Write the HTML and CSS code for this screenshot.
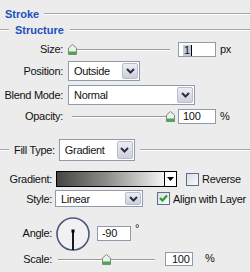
FILE: index.html
```html
<!DOCTYPE html>
<html>
  <head>
    <title>Stroke</title>
    <link rel="stylesheet" href="styles.css">
  </head>
  <body>
    <div class="panel">
      <div class="legend head"><span class="title">Stroke</span><span class="rule"></span></div>
      <div class="legend sub"><span class="rule lead"></span><span class="title">Structure</span><span class="rule"></span></div>

      <!-- Structure -->
      <div class="row r-size">
        <span class="lbl">Size:</span>
        <div class="slider s-size">
          <svg class="thumb" width="9" height="11" viewBox="0 0 9 11"><path d="M0.5 10.5 V4 L4.5 0.5 L8.5 4 V10.5 Z" fill="#eef0ea" stroke="#7d8a7d"/><rect x="1" y="7.5" width="7" height="2.5" fill="#3cb04a"/></svg>
          <span class="track"></span>
        </div>
        <span class="field f-size"><span class="sel">1</span></span>
        <span class="unit">px</span>
      </div>

      <div class="row r-pos">
        <span class="lbl">Position:</span>
        <div class="select sel-pos">
          <span class="val">Outside</span>
          <span class="btn"><svg width="9" height="6" viewBox="0 0 9 6"><path d="M1 1 L4.5 4.5 L8 1" stroke="#2a2d48" stroke-width="2" fill="none"/></svg></span>
        </div>
      </div>

      <div class="row r-blend">
        <span class="lbl">Blend Mode:</span>
        <div class="select sel-blend">
          <span class="val">Normal</span>
          <span class="btn"><svg width="9" height="6" viewBox="0 0 9 6"><path d="M1 1 L4.5 4.5 L8 1" stroke="#2a2d48" stroke-width="2" fill="none"/></svg></span>
        </div>
      </div>

      <div class="row r-opacity">
        <span class="lbl">Opacity:</span>
        <div class="slider s-opacity">
          <span class="track"></span>
          <svg class="thumb" width="9" height="11" viewBox="0 0 9 11"><path d="M0.5 10.5 V4 L4.5 0.5 L8.5 4 V10.5 Z" fill="#eef0ea" stroke="#7d8a7d"/><rect x="1" y="7.5" width="7" height="2.5" fill="#3cb04a"/></svg>
        </div>
        <span class="field f-opacity">100</span>
        <span class="unit">%</span>
      </div>

      <!-- Fill -->
      <div class="row r-fill">
        <span class="rule lead"></span>
        <span class="fill-lbl">Fill Type:</span>
        <div class="select sel-fill">
          <span class="val">Gradient</span>
          <span class="btn"><svg width="9" height="6" viewBox="0 0 9 6"><path d="M1 1 L4.5 4.5 L8 1" stroke="#2a2d48" stroke-width="2" fill="none"/></svg></span>
        </div>
        <span class="rule"></span>
      </div>

      <div class="row sec2 r-grad">
        <span class="lbl">Gradient:</span>
        <div class="grad">
          <span class="ramp"></span>
          <span class="drop"><svg width="7" height="4" viewBox="0 0 7 4"><path d="M0 0 H7 L3.5 4 Z" fill="#000"/></svg></span>
        </div>
        <span class="check c-rev"></span>
        <span class="check-lbl">Reverse</span>
      </div>

      <div class="row sec2 r-style">
        <span class="lbl">Style:</span>
        <div class="select sel-style">
          <span class="val">Linear</span>
          <span class="btn"><svg width="9" height="6" viewBox="0 0 9 6"><path d="M1 1 L4.5 4.5 L8 1" stroke="#2a2d48" stroke-width="2" fill="none"/></svg></span>
        </div>
        <span class="check c-align"><svg width="11" height="11" viewBox="0 0 11 11"><path d="M2 5 L4.5 7.5 L9 2.5" stroke="#21a121" stroke-width="2.2" fill="none"/></svg></span>
        <span class="check-lbl">Align with Layer</span>
      </div>

      <div class="row sec2 r-angle">
        <span class="lbl">Angle:</span>
        <svg class="dial" width="36" height="36" viewBox="0 0 36 36"><circle cx="18" cy="18" r="16" fill="#f1f1f3" stroke="#4c5878" stroke-width="1.6"/><line x1="18" y1="15" x2="18" y2="34" stroke="#000" stroke-width="1.8"/><rect x="16.5" y="13.5" width="3" height="3" fill="#000"/></svg>
        <span class="field f-angle">-90</span>
        <span class="deg">°</span>
      </div>

      <div class="row sec2 r-scale">
        <span class="lbl">Scale:</span>
        <div class="slider s-scale">
          <span class="track"></span>
          <svg class="thumb" width="9" height="11" viewBox="0 0 9 11"><path d="M0.5 10.5 V4 L4.5 0.5 L8.5 4 V10.5 Z" fill="#eef0ea" stroke="#7d8a7d"/><rect x="1" y="7.5" width="7" height="2.5" fill="#3cb04a"/></svg>
          <span class="track"></span>
        </div>
        <span class="field f-scale">100</span>
        <span class="unit">%</span>
      </div>
    </div>
  </body>
</html>
```

FILE: styles.css
```css
body {
  margin: 0;
  background: #ececec;
  font-family: "Liberation Sans", Arial, sans-serif;
  font-size: 11px;
  letter-spacing: -0.3px;
  color: #111;
}
.panel {
  width: 250px;
  height: 272px;
  overflow: hidden;
}
.legend {
  display: flex;
  align-items: center;
  height: 16px;
}
.legend .title {
  font-weight: bold;
  color: #1f4fc0;
  letter-spacing: 0;
}
.rule {
  flex: 1;
  height: 1px;
  background: #a6a6a6;
  border-bottom: 1px solid #fff;
}
.head {
  margin-top: 6px;
  padding-left: 5px;
}
.head .rule {
  margin-left: 5px;
}
.rule.lead {
  flex: none;
  width: 9px;
}
.sub .lead {
  margin-right: 6px;
}
.sub .title + .rule {
  margin-left: 6px;
}

.row {
  display: flex;
  align-items: center;
}
.lbl {
  flex: none;
  width: 63px;
  margin-right: 5px;
  text-align: right;
}
.sec2 .lbl {
  width: 52px;
  margin-right: 3px;
}

/* sliders */
.slider {
  display: flex;
  align-items: center;
  flex: none;
}
.track {
  flex: 1;
  height: 1px;
  background: #9a9a9a;
  border-bottom: 1px solid #fff;
  margin-top: 2px;
}
.thumb {
  flex: none;
  display: block;
}
.s-size {
  width: 102px;
}
.s-opacity {
  width: 103px;
  margin-left: 4px;
}
.s-scale {
  width: 97px;
  margin-left: 3px;
}

/* text fields */
.field {
  flex: none;
  box-sizing: border-box;
  height: 15px;
  line-height: 13px;
  border: 1px solid #8f9aaa;
  background: #fff;
  padding-left: 4px;
}
.f-size {
  width: 38px;
  margin-left: 8px;
  padding-top: 1px;
}
.f-size .sel {
  display: inline-block;
  height: 11px;
  line-height: 11px;
  background: #c4c9d9;
  border-right: 1px solid #000;
  padding: 0 1px;
}
.f-opacity {
  width: 38px;
  margin-left: 3px;
}
.f-angle {
  width: 34px;
  margin-left: 6px;
}
.f-scale {
  width: 28px;
  margin-left: 10px;
  height: 14px;
  padding-left: 6px;
}
.unit {
  margin-left: 4px;
}
.r-scale .unit {
  margin-left: 12px;
  align-self: flex-start;
}
.deg {
  align-self: flex-start;
  margin-left: 4px;
  margin-top: 6px;
}

/* drop-down selects */
.select {
  flex: none;
  display: flex;
  box-sizing: border-box;
  border: 1px solid #8f9aaa;
  background: #fff;
}
.select .val {
  flex: 1;
  padding-left: 5px;
  display: flex;
  align-items: center;
}
.select .btn {
  flex: none;
  width: 16px;
  margin: 1px;
  box-sizing: border-box;
  border: 1px solid #b8bccb;
  border-radius: 2px;
  background: linear-gradient(#eceef3, #cdd0da);
  display: flex;
  align-items: center;
  justify-content: center;
}
.sel-pos {
  width: 72px;
  height: 20px;
}
.sel-blend {
  width: 127px;
  height: 20px;
}
.sel-fill {
  width: 76px;
  height: 22px;
  margin-left: 4px;
}
.sel-style {
  width: 88px;
  height: 17px;
}

/* gradient swatch */
.grad {
  flex: none;
  display: flex;
  width: 121px;
  height: 16px;
  box-sizing: border-box;
  border: 1px solid #000;
  margin-left: 1px;
}
.grad .ramp {
  flex: 1;
  background: linear-gradient(to right, #454545, #8a8a8a 45%, #f4f4f4);
}
.grad .drop {
  flex: none;
  width: 11px;
  border-left: 1px solid #000;
  background: #fff;
  display: flex;
  align-items: center;
  justify-content: center;
}

/* checkboxes */
.check {
  flex: none;
  box-sizing: border-box;
  width: 13px;
  height: 13px;
  border: 1px solid #5b6f8e;
  background: linear-gradient(135deg, #dcdde3, #fafafa);
  display: flex;
  align-items: center;
  justify-content: center;
}
.check-lbl {
  margin-left: 3px;
}
.c-rev {
  margin-left: 9px;
}
.c-align {
  margin-left: 14px;
}

/* fill type legend */
.fill-lbl {
  margin-left: 5px;
}
.r-fill .rule:last-child {
  margin-left: 5px;
}

/* vertical rhythm */
.r-size { margin-top: 3px; height: 16px; }
.r-pos { margin-top: 4px; height: 20px; }
.r-blend { margin-top: 4px; height: 20px; }
.r-opacity { margin-top: 3px; height: 16px; }
.r-fill { margin-top: 15px; height: 22px; }
.r-grad { margin-top: 10px; height: 16px; }
.r-style { margin-top: 3px; height: 17px; }
.r-angle { margin-top: 9px; height: 34px; }
.r-scale { margin-top: 2px; height: 14px; }
.dial {
  flex: none;
  margin-top: 2px;
}
```
